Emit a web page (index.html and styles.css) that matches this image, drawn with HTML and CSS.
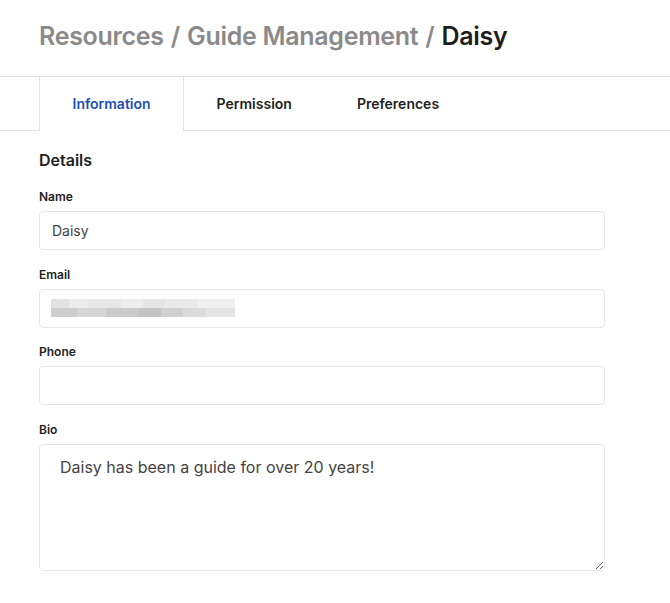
FILE: index.html
```html
<!DOCTYPE html>
<html lang="en">
<head>
    <meta charset="UTF-8">
    <meta name="viewport" content="width=device-width, initial-scale=1.0">
    <title>Daisy - Guide Management</title>
    <link rel="stylesheet" href="styles.css">
</head>
<body>

<!-- 麵包屑標題 -->
<h1 class="crumbs">
    <span class="crumb">Resources</span>
    <span class="sep">/</span>
    <span class="crumb">Guide Management</span>
    <span class="sep">/</span>
    <span class="current">Daisy</span>
</h1>

<!-- 分頁 -->
<div class="tabs">
    <button class="tab active">Information</button>
    <button class="tab">Permission</button>
    <button class="tab">Preferences</button>
</div>

<div class="content">
    <h2>Details</h2>
    <form class="details">
        <label for="name">Name</label>
        <input type="text" id="name" value="Daisy">

        <label for="email">Email</label>
        <div class="field blurred">
            <span class="pix"></span>
        </div>

        <label for="phone">Phone</label>
        <input type="text" id="phone">

        <label for="bio">Bio</label>
        <textarea id="bio">Daisy has been a guide for over 20 years!</textarea>
    </form>
</div>

</body>
</html>
```

FILE: styles.css
```css
body {
    font-family: Inter, "Noto Sans", sans-serif;
    margin: 0;
    background-color: #fff;
    color: #222;
}

.crumbs {
    margin: 0;
    padding: 21px 39px 0;
    height: 55px;
    font-size: 25px;
    font-weight: 600;
    letter-spacing: -0.3px;
    display: flex;
    gap: 7px;
    box-sizing: border-box;
}

.crumb, .sep {
    color: #8a8a8a;
}

.current {
    color: #1e1e1e;
}

.tabs {
    display: flex;
    height: 55px;
    margin-top: 21px;
    padding-left: 39px;
    border-top: 1px solid #e4e4e4;
    border-bottom: 1px solid #e4e4e4;
    box-sizing: border-box;
}

.tab {
    background: none;
    border: none;
    font-family: inherit;
    font-size: 14px;
    font-weight: 600;
    color: #222;
    padding: 0 32.5px 2px;
    margin-bottom: -1px;
    cursor: pointer;
}

.tab.active {
    color: #1d4fb8;
    background-color: #fff;
    border-left: 1px solid #e4e4e4;
    border-right: 1px solid #e4e4e4;
}

.content {
    padding: 19px 65px 0 39px;
}

h2 {
    font-size: 16px;
    font-weight: 600;
    margin: 0 0 19px;
    color: #222;
}

.details {
    display: flex;
    flex-direction: column;
}

label {
    font-size: 12px;
    font-weight: 600;
    color: #222;
    margin-bottom: 7px;
}

input, textarea, .field {
    font-family: inherit;
    font-size: 14px;
    color: #444;
    height: 39px;
    padding: 0 12px;
    margin-bottom: 16.5px;
    border: 1px solid #e6e6e6;
    border-radius: 4px;
    box-sizing: border-box;
    width: 100%;
}

.field {
    display: flex;
    align-items: center;
}

/* 模糊處理的 email */
.pix {
    display: block;
    width: 184px;
    height: 18px;
    margin-left: -1px;
    background:
        linear-gradient(90deg, #e2e2e2 0 10%, #ececec 10% 20%, #e6e6e6 20% 38%, #ededed 38% 50%, #e4e4e4 50% 62%, #eaeaea 62% 80%, #f0f0f0 80% 100%) top / 100% 50% no-repeat,
        linear-gradient(90deg, #cdcdcd 0 14%, #d6d6d6 14% 30%, #cacaca 30% 48%, #c4c4c4 48% 60%, #d0d0d0 60% 72%, #dadada 72% 84%, #e4e4e4 84% 100%) bottom / 100% 50% no-repeat;
}

textarea {
    height: 127px;
    padding: 10px 20px;
    font-size: 16px;
    line-height: 24px;
    resize: vertical;
}
```
